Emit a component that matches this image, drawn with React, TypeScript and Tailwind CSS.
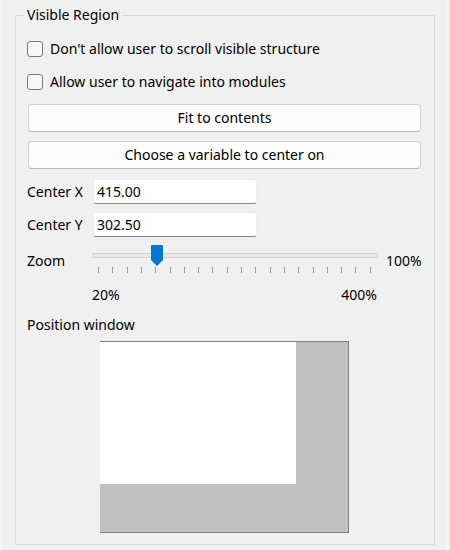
import React from "react";

const font = { fontFamily: '"Segoe UI", "Noto Sans", sans-serif' };

function Checkbox({ label, className }: { label: string; className?: string }) {
  return (
    <div className={`flex h-[16px] items-center ${className ?? ""}`}>
      <div className="h-[16px] w-[16px] shrink-0 rounded-[3px] border border-[#7a7a7a] bg-[#f7f7f7]" />
      <span className="ml-[7px] text-[14px] leading-[18px] text-black">{label}</span>
    </div>
  );
}

function Button({ label, className }: { label: string; className?: string }) {
  return (
    <div
      className={`flex h-[28px] w-[393px] items-center justify-center rounded-[4px] border border-[#d0d0d0] border-b-[#b8b8b8] bg-[#fdfdfd] text-[14px] leading-[18px] text-black ${className ?? ""}`}
    >
      {label}
    </div>
  );
}

function Field({ label, value, className }: { label: string; value: string; className?: string }) {
  return (
    <div className={`flex h-[25px] items-center ${className ?? ""}`}>
      <span className="w-[66px] text-[14px] leading-[18px] text-black">{label}</span>
      <div className="flex h-[25px] w-[164px] items-center rounded-[3px] border border-[#ececec] border-b-[#858585] bg-white pl-[3px] text-[14px] leading-[18px] text-black">
        {value}
      </div>
    </div>
  );
}

export default function App() {
  const ticks = Array.from({ length: 20 }, (_, i) => i);
  return (
    <div className="h-[550px] w-[450px] overflow-hidden bg-[#f0f0f0]" style={font}>
      <div className="flex h-full">
        <div className="ml-[1px] w-[1px] bg-[#fafafa]" />
        <div className="flex w-[444px] flex-col pl-[13px] pt-[15px]">
          <div className="relative h-[530px] w-[420px] border border-[#dcdcdc]">
            <div className="absolute left-[8px] top-[-10px] bg-[#f0f0f0] px-[3px] text-[14px] leading-[18px] text-black">
              Visible Region
            </div>
            <div className="flex flex-col pl-[11px]">
              <Checkbox label="Don't allow user to scroll visible structure" className="mt-[25px]" />
              <Checkbox label="Allow user to navigate into modules" className="mt-[17px]" />
              <Button label="Fit to contents" className="mt-[14px] ml-[1px]" />
              <Button label="Choose a variable to center on" className="mt-[9px] ml-[1px]" />
              <Field label="Center X" value="415.00" className="mt-[10px]" />
              <Field label="Center Y" value="302.50" className="mt-[8px]" />
              <div className="mt-[8px] flex h-[28px]">
                <span className="mt-[7px] w-[65px] text-[14px] leading-[18px] text-black">Zoom</span>
                <div className="relative h-[28px] w-[286px]">
                  <div className="absolute left-0 top-[8px] h-[5px] w-[286px] rounded-[1px] border border-[#d6d6d6] bg-[#e7e9e9]" />
                  {ticks.map((i) => (
                    <div
                      key={i}
                      className="absolute top-[22px] h-[6px] w-[1px] bg-[#9a9a94]"
                      style={{ left: 6 + Math.round(i * 14.3) }}
                    />
                  ))}
                  <svg className="absolute left-[59px] top-0" width="12" height="21" viewBox="0 0 12 21">
                    <path d="M1 0 H11 a1 1 0 0 1 1 1 V15 L6 21 L0 15 V1 a1 1 0 0 1 1 -1 Z" fill="#0078d7" />
                  </svg>
                </div>
                <span className="ml-[8px] mt-[7px] text-[14px] leading-[18px] text-black">100%</span>
              </div>
              <div className="mt-[13px] flex h-[18px] w-[350px] justify-between pl-[65px] text-[14px] leading-[18px] text-black">
                <span>20%</span>
                <span>400%</span>
              </div>
              <div className="mt-[12px] text-[14px] leading-[18px] text-black">Position window</div>
              <div className="ml-[73px] mt-[7px] flex h-[192px] w-[249px] flex-col border-b border-r border-t border-[#7f7f7f] bg-[#c0c0c0]">
                <div className="h-[142px] w-[196px] bg-white" />
              </div>
            </div>
          </div>
        </div>
        <div className="w-[1px] bg-[#fafafa]" />
      </div>
    </div>
  );
}
